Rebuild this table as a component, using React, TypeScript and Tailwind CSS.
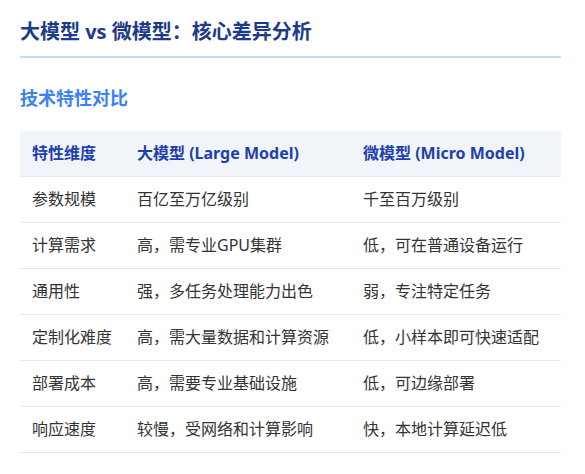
import React from 'react';

const rows: [string, string, string][] = [
  ['参数规模', '百亿至万亿级别', '千至百万级别'],
  ['计算需求', '高，需专业GPU集群', '低，可在普通设备运行'],
  ['通用性', '强，多任务处理能力出色', '弱，专注特定任务'],
  ['定制化难度', '高，需大量数据和计算资源', '低，小样本即可快速适配'],
  ['部署成本', '高，需要专业基础设施', '低，可边缘部署'],
  ['响应速度', '较慢，受网络和计算影响', '快，本地计算延迟低'],
];

export default function App() {
  return (
    <div
      className="min-h-[474px] bg-white px-5 pt-[18px]"
      style={{ fontFamily: '"Noto Sans", "Noto Sans CJK SC", sans-serif' }}
    >
      <div className="w-[541px]">
        <h1 className="border-b-2 border-[#bfdbfe] pb-[10px] text-[20px] font-bold leading-[28px] text-[#1e3a8a]">
          大模型 vs 微模型：核心差异分析
        </h1>

        <h2 className="mt-[27px] text-[18px] font-bold leading-[26px] text-[#3b82f6]">技术特性对比</h2>

        <table className="mt-[20px] w-full border-collapse text-left text-[16px]">
          <thead>
            <tr className="border-b border-[#e5e7eb] bg-[#f1f5f9]">
              <th className="h-[45px] w-[105px] px-3 font-bold text-[#1e40af]">特性维度</th>
              <th className="h-[45px] w-[226px] px-3 font-bold text-[#1e40af]">大模型 (Large Model)</th>
              <th className="h-[45px] px-3 font-bold text-[#1e40af]">微模型 (Micro Model)</th>
            </tr>
          </thead>
          <tbody>
            {rows.map((r) => (
              <tr key={r[0]} className="border-b border-[#e5e7eb]">
                <td className="h-[46px] px-3 text-[#333333]">{r[0]}</td>
                <td className="h-[46px] px-3 text-[#333333]">{r[1]}</td>
                <td className="h-[46px] px-3 text-[#333333]">{r[2]}</td>
              </tr>
            ))}
          </tbody>
        </table>
      </div>
    </div>
  );
}
